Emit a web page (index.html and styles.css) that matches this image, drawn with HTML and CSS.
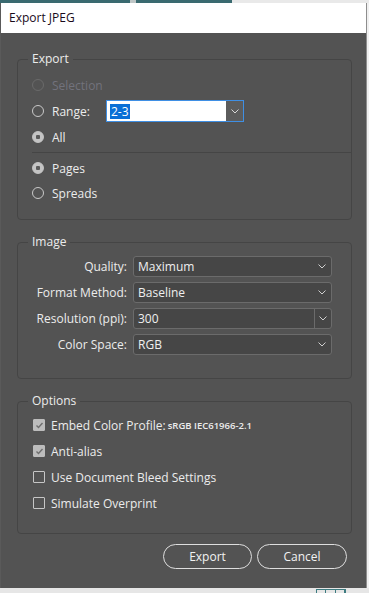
FILE: index.html
```html
<!DOCTYPE html>
<html lang="en">
<head>
    <meta charset="UTF-8">
    <title>Export JPEG</title>
    <link rel="stylesheet" href="styles.css">
</head>
<body>

<div class="desk-top">
    <span class="task task-a"></span>
    <span class="task-gap"></span>
    <span class="task task-b"></span>
</div>

<div class="dialog">
    <div class="titlebar">Export JPEG</div>

    <div class="content">
        <!-- Export range -->
        <fieldset class="group group-export">
            <legend>Export</legend>
            <div class="radio-list spaced">
                <div class="radio disabled"><span class="dot"></span>Selection</div>
                <div class="radio">
                    <span class="dot"></span>
                    <span class="range-label">Range:</span>
                    <span class="combo">
                        <span class="combo-text"><span class="selected-text">2-3</span></span>
                        <span class="combo-btn">
                            <svg width="8" height="5" viewBox="0 0 8 5"><polyline points="0.5,0.5 4,4 7.5,0.5" fill="none" stroke="#d8d8d8" stroke-width="1"/></svg>
                        </span>
                    </span>
                </div>
                <div class="radio checked"><span class="dot"></span>All</div>
            </div>
            <div class="sep"></div>
            <div class="radio-list loose">
                <div class="radio checked"><span class="dot"></span>Pages</div>
                <div class="radio"><span class="dot"></span>Spreads</div>
            </div>
        </fieldset>

        <!-- Image settings -->
        <fieldset class="group group-image">
            <legend>Image</legend>
            <div class="field">
                <span class="field-label">Quality:</span>
                <span class="select"><span class="select-value">Maximum</span><span class="chev"><svg width="8" height="5" viewBox="0 0 8 5"><polyline points="0.5,0.5 4,4 7.5,0.5" fill="none" stroke="#cfcfcf" stroke-width="1"/></svg></span></span>
            </div>
            <div class="field">
                <span class="field-label">Format Method:</span>
                <span class="select"><span class="select-value">Baseline</span><span class="chev"><svg width="8" height="5" viewBox="0 0 8 5"><polyline points="0.5,0.5 4,4 7.5,0.5" fill="none" stroke="#cfcfcf" stroke-width="1"/></svg></span></span>
            </div>
            <div class="field">
                <span class="field-label">Resolution (ppi):</span>
                <span class="select editable"><span class="select-value">300</span><span class="chev"><svg width="8" height="5" viewBox="0 0 8 5"><polyline points="0.5,0.5 4,4 7.5,0.5" fill="none" stroke="#cfcfcf" stroke-width="1"/></svg></span></span>
            </div>
            <div class="field">
                <span class="field-label">Color Space:</span>
                <span class="select"><span class="select-value">RGB</span><span class="chev"><svg width="8" height="5" viewBox="0 0 8 5"><polyline points="0.5,0.5 4,4 7.5,0.5" fill="none" stroke="#cfcfcf" stroke-width="1"/></svg></span></span>
            </div>
        </fieldset>

        <!-- Options -->
        <fieldset class="group group-options">
            <legend>Options</legend>
            <div class="check checked"><span class="box"><svg width="9" height="9" viewBox="0 0 9 9"><polyline points="1.5,4.5 3.5,6.5 7.5,2" fill="none" stroke="#6e6e6e" stroke-width="1.4"/></svg></span>Embed Color Profile:<span class="profile">sRGB IEC61966-2.1</span></div>
            <div class="check checked"><span class="box"><svg width="9" height="9" viewBox="0 0 9 9"><polyline points="1.5,4.5 3.5,6.5 7.5,2" fill="none" stroke="#6e6e6e" stroke-width="1.4"/></svg></span>Anti-alias</div>
            <div class="check"><span class="box"></span>Use Document Bleed Settings</div>
            <div class="check"><span class="box"></span>Simulate Overprint</div>
        </fieldset>

        <div class="buttons">
            <button class="btn btn-export">Export</button>
            <button class="btn btn-cancel">Cancel</button>
        </div>
    </div>
</div>

<div class="desk-bottom">
    <span class="tray-icon"><span></span><span></span><span></span></span>
</div>

</body>
</html>
```

FILE: styles.css
```css
* {
    margin: 0;
    padding: 0;
    box-sizing: border-box;
}

body {
    font-family: "Open Sans", "Noto Sans", sans-serif;
    font-size: 12px;
    background-color: #f0f0f0;
    width: 369px;
    height: 593px;
    overflow: hidden;
}

.desk-top {
    display: flex;
    height: 3px;
    background-color: #e9e9e9;
}

.task {
    background-color: #3a6a70;
}

.task-a { width: 130px; }
.task-gap { width: 6px; background-color: #bfc6c6; }
.task-b { width: 96px; }

.dialog {
    width: 367px;
    border-right: 1px solid #8e8e8e;
    border-left: 1px solid #5a5a5a;
}

.titlebar {
    height: 30px;
    background-color: #fff;
    color: #1a0a1a;
    padding-left: 8px;
    line-height: 29px;
    font-size: 12px;
}

.content {
    background-color: #535353;
    height: 555px;
    padding: 18px 14px 0 16px;
    color: #ececec;
}

.group {
    border: 1px solid #454545;
    border-radius: 4px;
    min-width: 0;
}

.group legend {
    margin-left: 10px;
    padding: 0 4px;
    line-height: 16px;
    color: #ececec;
}

.group-export {
    padding: 6px 0 14px 0;
}

.group-image {
    margin-top: 14px;
    padding: 6px 0 23px 0;
}

.group-options {
    margin-top: 14px;
    padding: 4px 0 18px 0;
}

/* radio rows */
.radio-list {
    display: flex;
    flex-direction: column;
}

.radio-list.spaced {
    gap: 2px;
}

.radio-list.loose {
    gap: 1px;
}

.radio {
    display: flex;
    align-items: center;
    height: 24px;
    padding-left: 14px;
}

.radio .dot {
    width: 12px;
    height: 12px;
    border: 1px solid #c9c9c9;
    border-radius: 50%;
    margin-right: 8px;
    flex-shrink: 0;
}

.radio.checked .dot {
    background: radial-gradient(circle, #5a5a5a 0 2px, #c4c4c4 2.5px);
    border-color: #c4c4c4;
}

.radio.disabled {
    color: #72727c;
}

.radio.disabled .dot {
    border-color: #6a6a6a;
}

.range-label {
    width: 54px;
}

.combo {
    display: flex;
    width: 138px;
    height: 22px;
    border: 1px solid #3f8fe4;
    background-color: #fff;
}

.combo-text {
    flex: 1;
    padding-left: 3px;
    display: flex;
    align-items: center;
}

.selected-text {
    background-color: #0a6fd6;
    color: #fff;
    line-height: 15px;
    padding: 0 1px;
}

.combo-btn {
    width: 17px;
    background-color: #5c5c5c;
    display: flex;
    align-items: center;
    justify-content: center;
}

.sep {
    height: 1px;
    background-color: #454545;
    margin: 3px 0 3px 14px;
}

/* image fields */
.field {
    display: flex;
    align-items: center;
    height: 21px;
    margin-bottom: 5px;
}

.field:last-child {
    margin-bottom: 0;
}

.field-label {
    width: 109px;
    text-align: right;
    margin-right: 6px;
}

.select {
    display: flex;
    width: 199px;
    height: 21px;
    background-color: #464646;
    border: 1px solid #6b6b6b;
    border-radius: 3px;
}

.select-value {
    flex: 1;
    padding-left: 4px;
    line-height: 19px;
    color: #efefef;
}

.chev {
    width: 17px;
    display: flex;
    align-items: center;
    justify-content: center;
    padding-right: 2px;
}

.select.editable .chev {
    border-left: 1px solid #6b6b6b;
    padding-right: 0;
}

/* checkboxes */
.check {
    display: flex;
    align-items: center;
    height: 24px;
    margin-bottom: 2px;
    padding-left: 15px;
}

.check:last-child {
    margin-bottom: 0;
}

.check .box {
    width: 12px;
    height: 12px;
    border: 1px solid #c6c6c6;
    border-radius: 1px;
    margin-right: 6px;
    display: flex;
    align-items: center;
    justify-content: center;
}

.check.checked .box {
    background-color: #bcbcbc;
    border-color: #bcbcbc;
}

.profile {
    font-size: 9.5px;
    font-weight: 600;
    margin-left: 2px;
}

/* buttons */
.buttons {
    display: flex;
    justify-content: flex-end;
    gap: 5px;
    margin-top: 10px;
    padding-right: 5px;
}

.btn {
    height: 25px;
    border: 1.5px solid #dedede;
    border-radius: 13px;
    background-color: #535353;
    color: #f2f2f2;
    font-family: "Open Sans", "Noto Sans", sans-serif;
    font-size: 12px;
}

.btn-export { width: 89px; }
.btn-cancel { width: 90px; }

.desk-bottom {
    height: 5px;
    background-color: #e6e6e6;
    position: relative;
}

.tray-icon {
    position: absolute;
    left: 316px;
    top: 1px;
    width: 30px;
    height: 5px;
    border: 1px solid #3d7b80;
    display: flex;
}

.tray-icon span {
    flex: 1;
    border-right: 1px solid #3d7b80;
}
```
